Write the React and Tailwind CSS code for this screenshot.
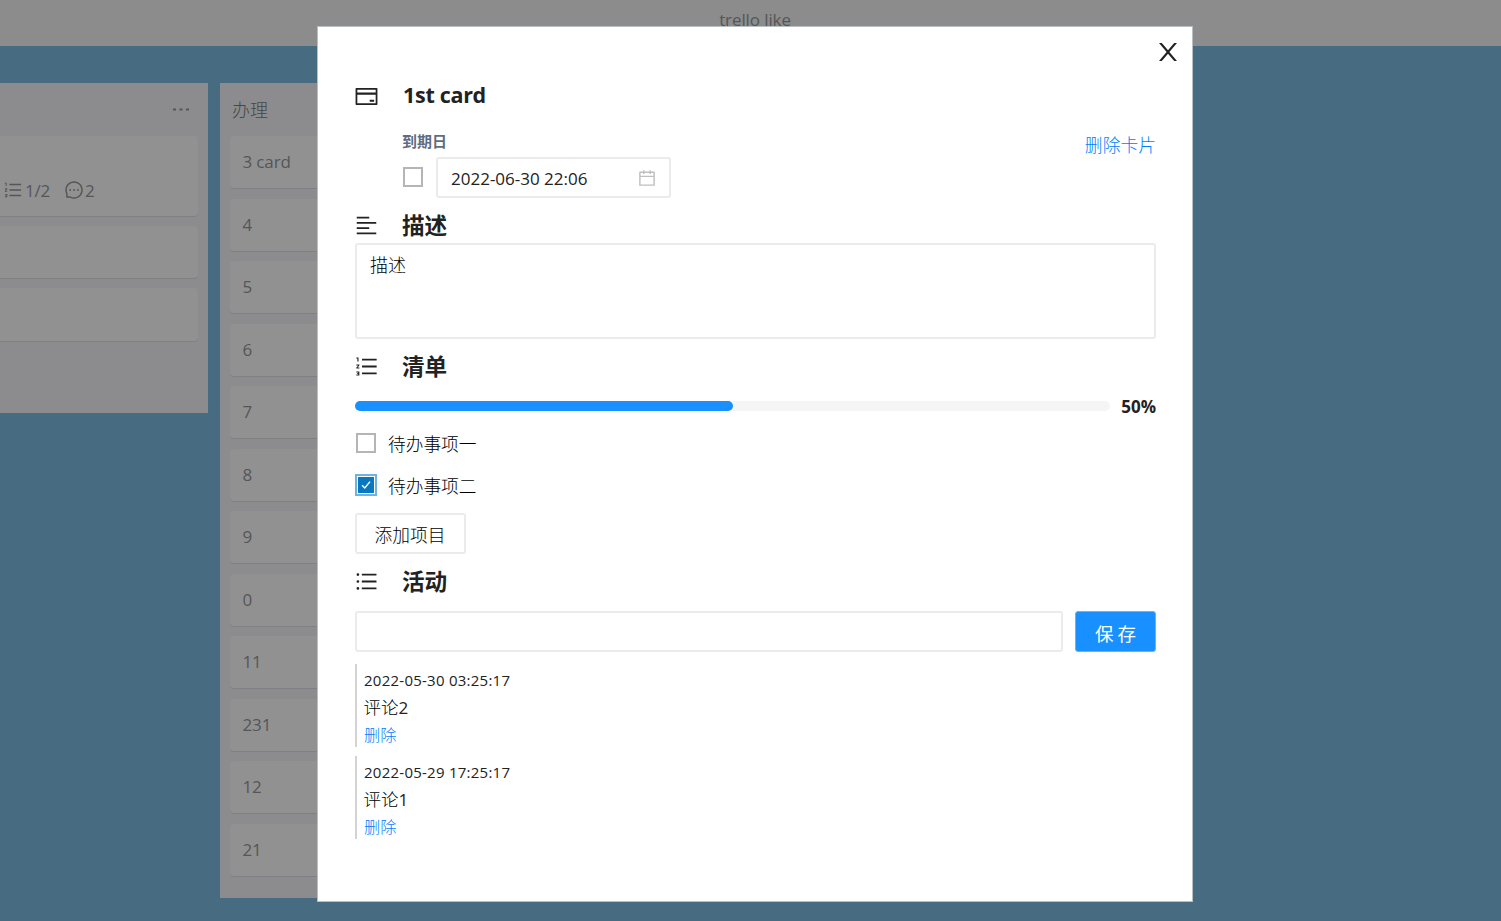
import {
  AiOutlineAlignLeft,
  AiOutlineCalendar,
  AiOutlineCreditCard,
  AiOutlineMessage,
  AiOutlineOrderedList,
  AiOutlineUnorderedList,
} from "react-icons/ai";

const cards = ["3 card", "4", "5", "6", "7", "8", "9", "0", "11", "231", "12", "21"];

const comments = [
  { time: "2022-05-30 03:25:17", text: "评论2" },
  { time: "2022-05-29 17:25:17", text: "评论1" },
];

function Card({ children, className = "h-[52px]" }) {
  return (
    <div className={`rounded-[4px] bg-[#919191] px-[13px] shadow-[0_1px_0_#7f8084] ${className}`}>{children}</div>
  );
}

function SectionTitle({ icon: Icon, titleClass = "pt-[2px] text-[22.6px]", children }) {
  return (
    <div className="flex h-[30px] items-center">
      <Icon size={25} className="-ml-px mr-[23px]" />
      <h2 className={`font-bold leading-[30px] ${titleClass}`}>{children}</h2>
    </div>
  );
}

function Checkbox({ checked }) {
  if (!checked) {
    return <span className="m-px size-[20px] shrink-0 border-2 border-[#b5b5b5] bg-white" />;
  }
  return (
    <span className="flex size-[22px] shrink-0 border-2 border-[#6fb4df] p-px">
      <span className="flex flex-1 items-center justify-center bg-[#0879c0]">
        <svg viewBox="0 0 12 12" className="size-[12px]" fill="none" stroke="white" strokeWidth="1.4">
          <path d="M2 6.2 4.8 9 10 2.6" />
        </svg>
      </span>
    </span>
  );
}

export default function App() {
  return (
    <div className="relative h-[921px] w-[1501px] overflow-hidden bg-[#476b80] font-['Open_Sans','Noto_Sans_CJK_SC',sans-serif] text-[17px] text-[#555657]">
      <header className="flex h-[46px] items-start justify-center bg-[#8c8c8d] pl-[9px] pt-[8px] text-[17px] leading-6">
        <span className="tracking-[-0.1px]">trello like</span>
      </header>

      <main className="flex items-start gap-3 pt-[37px]">
        <section className="h-[330px] w-[208px] bg-[#8c8c8e] pr-[10px]">
          <div className="flex h-[53px] items-center justify-end pr-[9px]">
            <svg width="16" height="3" viewBox="0 0 16 3" fill="currentColor">
              <path d="M0 .5h3v2H0zM6.5 .5h3v2h-3zM13 .5h3v2h-3z" />
            </svg>
          </div>
          <div className="flex flex-col gap-[10px]">
            <Card className="h-[80px] rounded-l-none">
              <div className="-ml-[10px] flex h-[80px] items-end pb-[13px] leading-6">
                <AiOutlineOrderedList size={20} className="mb-[3px]" />
                <span className="ml-[2px] tracking-[-0.2px]">1/2</span>
                <AiOutlineMessage size={20} className="mb-[3px] ml-[14px]" />
                <span className="ml-px">2</span>
              </div>
            </Card>
            <Card className="h-[52px] rounded-l-none" />
            <Card className="h-[52.5px] rounded-l-none" />
          </div>
        </section>

        <section className="h-[815px] w-[338px] bg-[#8c8c8e] px-[10px]">
          <div className="flex h-[53px] items-center pl-[2px] pt-[2px] text-[18px] font-light text-[#454647]">办理</div>
          <div className="flex flex-col gap-[10.5px]">
            {cards.map((name) => (
              <Card key={name}>
                <span className="-ml-[0.5px] block leading-[52px] tracking-[-0.15px]">{name}</span>
              </Card>
            ))}
          </div>
        </section>
      </main>

      <div className="absolute left-[317px] top-[26px] h-[876px] w-[876px] border border-[#b9c0c3] bg-white px-[37px] text-[#222]">
        <button aria-label="关闭" className="absolute right-[15px] top-[16px]">
          <svg width="18" height="18" viewBox="0 0 18 18" fill="currentColor">
            <path d="M0 0h2.8L9 7.3 15.2 0H18L10.4 9 18 18h-2.8L9 10.7 2.8 18H0l7.6-9z" />
          </svg>
        </button>

        <div className="pt-[54px]">
          <SectionTitle icon={AiOutlineCreditCard} titleClass="pl-px text-[21.5px] tracking-[-0.3px] pb-[3px]">
            1st card
          </SectionTitle>
        </div>

        <div className="flex items-start justify-between pl-[47px] pt-[20px]">
          <div>
            <div className="text-[15px] font-bold leading-5 text-[#5e6c84]">到期日</div>
            <div className="mt-[5px] flex h-[42px] items-center">
              <Checkbox />
              <div className="ml-[12px] mt-px flex h-[41px] w-[235px] items-center justify-between rounded-[3px] border-2 border-[#ebebeb] pl-[13px] pr-[12px]">
                <span className="pt-[3px] text-[17px]">2022-06-30 22:06</span>
                <AiOutlineCalendar size={20} className="text-[#bfbfbf]" />
              </div>
            </div>
          </div>
          <a className="-mr-px pt-[2px] text-[17.8px] font-light leading-6 text-[#0080ff]">删除卡片</a>
        </div>

        <div className="pt-[12px]">
          <SectionTitle icon={AiOutlineAlignLeft}>描述</SectionTitle>
        </div>
        <div className="mt-[3px] h-[96px] w-[801px] rounded-[3px] border-2 border-[#ebebeb] px-[13px] py-[7px] text-[18px] font-light leading-[26px] text-black">
          描述
        </div>

        <div className="pt-[12px]">
          <SectionTitle icon={AiOutlineOrderedList}>清单</SectionTitle>
        </div>
        <div className="mt-[13px] flex h-[24px] w-[801px] items-center justify-between">
          <div className="h-[10px] w-[755px] rounded-full bg-[#f5f5f5]">
            <div className="h-full w-1/2 rounded-full bg-[#1890ff]" />
          </div>
          <span className="pt-[2px] text-[17px] font-bold">50%</span>
        </div>
        <div className="mt-[13px] flex h-[24px] items-center text-[17.7px] font-light text-black">
          <Checkbox />
          <span className="ml-[11px] pt-[2px]">待办事项一</span>
        </div>
        <div className="mt-[18px] flex h-[24px] items-center text-[17.7px] font-light text-black">
          <Checkbox checked />
          <span className="ml-[11px] pt-[3px]">待办事项二</span>
        </div>
        <button className="mt-[16px] flex h-[41px] w-[111px] items-center justify-center rounded-[3px] border-2 border-[#ebebeb] pr-px pt-[4px] text-[17.7px] font-light text-black">
          添加项目
        </button>

        <div className="pt-[12px]">
          <SectionTitle icon={AiOutlineUnorderedList}>活动</SectionTitle>
        </div>
        <div className="mt-[15px] flex w-[801px] justify-between">
          <div className="h-[41px] w-[708px] rounded-[3px] border-2 border-[#ebebeb]" />
          <button className="flex h-[41px] w-[81px] items-center justify-center gap-[4px] rounded-[3px] border border-[#63b3ff] bg-[#1890ff] pt-[4px] text-[18.5px] text-white">
            <span>保</span>
            <span>存</span>
          </button>
        </div>

        <div className="mt-[12px] flex flex-col gap-[9px]">
          {comments.map((c) => (
            <div key={c.time} className="h-[83px] border-l-2 border-[#d3d3d3] pl-[7px] pt-[3px]">
              <div className="text-[15px] leading-[26px] tracking-[0.25px]">{c.time}</div>
              <div className="-ml-[0.5px] text-[17.5px] leading-[28px] text-black">
                <span className="font-light">{c.text.slice(0, 2)}</span>
                <span className="text-[17px] text-[#222]">{c.text.slice(2)}</span>
              </div>
              <div className="text-[16.3px] font-light leading-[27px] text-[#0080ff]">删除</div>
            </div>
          ))}
        </div>
      </div>
    </div>
  );
}
